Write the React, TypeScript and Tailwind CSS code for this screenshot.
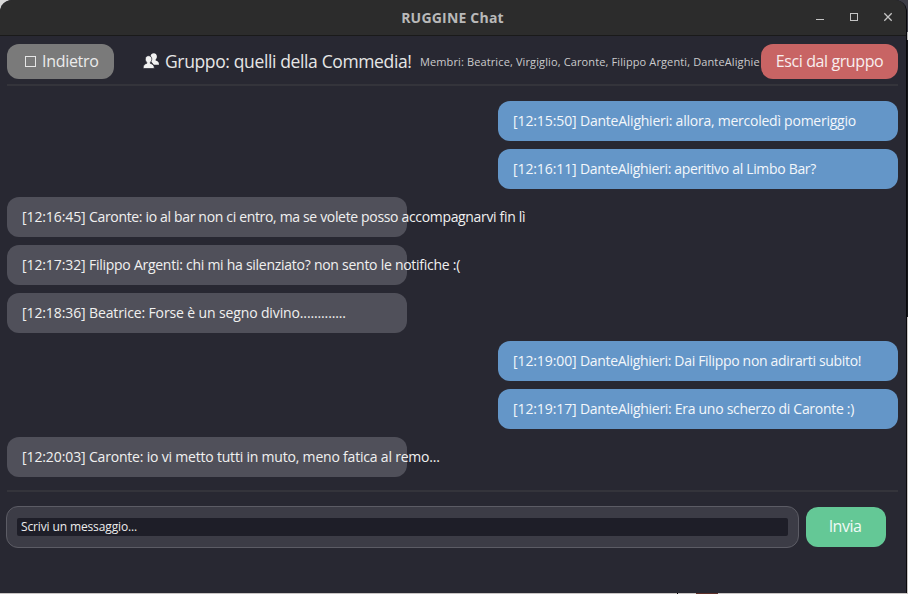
type Message = { time: string; text: string; mine?: boolean; tracking: string };

const messages: Message[] = [
  { time: "[12:15:50]", text: "DanteAlighieri: allora, mercoledì pomeriggio", mine: true, tracking: "tracking-[-0.24px]" },
  { time: "[12:16:11]", text: "DanteAlighieri: aperitivo al Limbo Bar?", mine: true, tracking: "tracking-[-0.32px]" },
  { time: "[12:16:45]", text: "Caronte: io al bar non ci entro, ma se volete posso accompagnarvi fin lì", tracking: "tracking-[-0.335px]" },
  { time: "[12:17:32]", text: "Filippo Argenti: chi mi ha silenziato? non sento le notifiche :(", tracking: "tracking-[-0.265px]" },
  { time: "[12:18:36]", text: "Beatrice: Forse è un segno divino.............", tracking: "tracking-[-0.13px]" },
  { time: "[12:19:00]", text: "DanteAlighieri: Dai Filippo non adirarti subito!", mine: true, tracking: "tracking-[-0.32px]" },
  { time: "[12:19:17]", text: "DanteAlighieri: Era uno scherzo di Caronte :)", mine: true, tracking: "tracking-[-0.29px]" },
  { time: "[12:20:03]", text: "Caronte: io vi metto tutti in muto, meno fatica al remo...", tracking: "tracking-[-0.2px]" },
];

function TitleBar() {
  return (
    <header className="relative flex h-9 shrink-0 items-center justify-center border-b border-[#1a1a1a] bg-[#2c2c2c]">
      <h1 className="mr-px text-[14px] leading-5 font-bold tracking-[0.2px] text-[#b9b9b9]">RUGGINE Chat</h1>
      <svg className="absolute top-0 right-0" width="100" height="35" viewBox="0 0 100 35" fill="none" stroke="#c4c4c4">
        <path d="M10 19.5h8" />
        <rect x="44.5" y="13.5" width="7" height="7" />
        <path d="M78.3 13.3l7.4 7.4M85.7 13.3l-7.4 7.4" strokeWidth="1.3" />
      </svg>
    </header>
  );
}

function PeopleIcon() {
  return (
    <svg width="16" height="16" viewBox="0 0 16 16" fill="#f2f2f2">
      <path d="M10.700 0.200c2 0 3.200 1.400 3.200 3.400 0 1.300-.6 2.300-1.300 3v1c2 .6 3.400 1.300 3.400 4.100h-5.200L7 7z" />
      <path d="M10.700 0.200C9 .2 8 1.200 7.600 2.700L9.500 6l1.500 5z" />
      <path
        d="M5.500 2.700c2.100 0 3.300 1.400 3.300 3.500 0 1.300-.6 2.400-1.400 3.100v1.100c2.200.6 3.900 1.500 3.900 5.100H.2c0-3.600 1.300-4.500 3.500-5.100V9.300c-.8-.7-1.400-1.800-1.400-3.100 0-2.100 1.200-3.500 3.200-3.500z"
        stroke="#282832"
        strokeWidth="0.7"
      />
    </svg>
  );
}

function GroupHeader() {
  return (
    <div className="flex h-[35px] shrink-0 items-center">
      <button className="flex h-[35px] w-[107px] shrink-0 items-center rounded-xl bg-[#7a7a7a] pl-[18px] text-[16px] text-[#ebebeb]">
        <span className="mr-[6px] size-[11px] border border-[#e6e6e6]" />
        <span className="pb-0.5 tracking-[-0.3px]">Indietro</span>
      </button>
      <div className="ml-[29px] flex w-[618px] shrink-0 items-center overflow-hidden whitespace-nowrap">
        <div className="flex w-[277px] shrink-0 items-center pb-0.5">
          <PeopleIcon />
          <span className="ml-[6px] text-[17.5px] leading-6 tracking-[-0.37px] text-[#e6e6e6]">
            Gruppo: quelli della Commedia!
          </span>
        </div>
        <span className="pt-px text-[11px] leading-4 tracking-[0.12px] text-[#cbcbcd]">
          Membri: Beatrice, Virgiglio, Caronte, Filippo Argenti, DanteAlighie
        </span>
      </div>
      <button className="h-[35px] w-[137px] shrink-0 rounded-xl bg-[#c86464] pb-0.5 text-[16px] tracking-[-0.4px] text-[#f8eeee]">
        Esci dal gruppo
      </button>
    </div>
  );
}

function Bubble({ time, text, mine, tracking }: Message) {
  return (
    <li
      className={`flex h-10 w-[400px] items-center rounded-xl px-[15px] pb-0.5 text-[14px] whitespace-nowrap ${
        mine ? "self-end bg-[#6496c8] text-[#f3f7fb]" : "bg-[#50505a] text-[#f0f0f0]"
      }`}
    >
      <span className="w-[67px] shrink-0 tracking-[-0.1px]">{time}</span>
      <span className={tracking}>{text}</span>
    </li>
  );
}

export default function App() {
  return (
    <div className="h-[594px] w-[908px] overflow-hidden bg-[linear-gradient(#3c3c45_0_32px,#b5b5b5_32px_40px,#15151a_40px_317px,#c9c5c4_317px)] pr-px font-['Open_Sans','Noto_Sans',sans-serif]">
      <div className="h-[593px] bg-linear-to-r from-[#d8d8d8] from-50% to-[#3c3c45] to-50%">
        <div className="flex h-[593px] flex-col overflow-hidden rounded-t-xl border-r border-[#09090c] bg-[#282832]">
          <TitleBar />
          <main className="flex flex-col pt-2 pr-2 pl-[7px]">
            <GroupHeader />
            <div className="mt-[5px] h-0.5 bg-[#34343b]" />
            <ul className="mt-[15px] flex flex-col gap-2">
              {messages.map((m) => (
                <Bubble key={m.time} {...m} />
              ))}
            </ul>
            <div className="mt-[13px] h-0.5 bg-[#34343b]" />
            <form className="mt-3.5 -ml-px flex items-center gap-[7px]">
              <div className="h-[42px] w-[793px] rounded-xl border border-[#5c5c65] bg-[#3c3c46] px-[10px] pt-[11px]">
                <div className="flex h-[18px] w-[771px] items-center rounded-xs bg-[#1e1e28] pl-1 text-[12px] tracking-[-0.13px] text-[#ececec]">
                  Scrivi un messaggio...
                </div>
              </div>
              <button type="button" className="h-10 w-20 rounded-xl bg-[#64c896] pr-0.5 pb-0.5 text-[16px] tracking-[-0.5px] text-[#f0faf5]">
                Invia
              </button>
            </form>
          </main>
        </div>
      </div>
      <div className="flex h-px bg-[#c9c5c4]">
        <i className="ml-[677px] w-px bg-black" />
        <i className="ml-[18px] w-[22px] bg-[#5e3029]" />
      </div>
    </div>
  );
}
